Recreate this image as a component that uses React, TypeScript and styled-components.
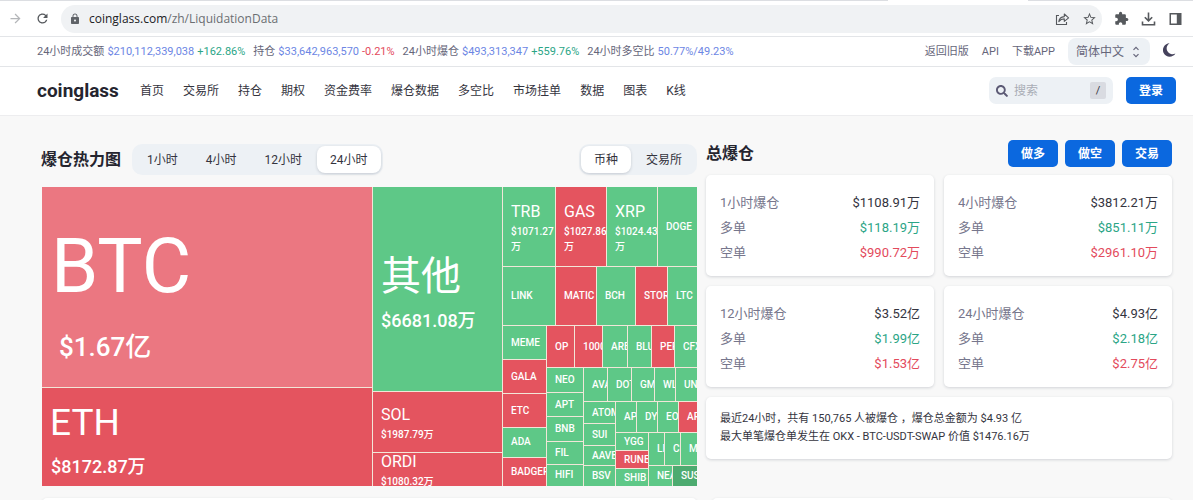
import React from 'react';
import styled, { createGlobalStyle, css } from 'styled-components';
import { MdArrowForward, MdExtension, MdLock, MdRefresh, MdStarBorder } from 'react-icons/md';
import { FaSearch } from 'react-icons/fa';

const GlobalStyle = createGlobalStyle`
  *, *::before, *::after { box-sizing: border-box; }
  body {
    margin: 0;
    background: #f8f8f8;
    color: #25252f;
    font-family: Roboto, "Noto Sans CJK SC", sans-serif;
    font-size: 12px;
  }
  button, input, select { font-family: inherit; }
  h1, h2, p, dl, dd { margin: 0; }
`;

const color = {
  ink: '#34343e',
  muted: '#66667a',
  label: '#76768c',
  blue: '#0b68df',
  value: '#6c86e4',
  up: '#2ba586',
  down: '#e34a5c',
  field: '#edf1f5',
  line: '#e3e5e8',
};

const Page = styled.div`
  height: 100vh;
  overflow: hidden;
`;

/* Browser toolbar */

const Toolbar = styled.div`
  display: flex;
  align-items: center;
  height: 37px;
  padding: 1px 10px 0 8px;
  gap: 12px;
  background: #fff;
  border-bottom: 1px solid ${color.line};
`;

const TabEdge = styled.div`
  display: flex;
  height: 1px;
  margin-bottom: -1px;
  position: relative;
`;

const TabEdgePart = styled.span<{ $grow: number; $active?: boolean }>`
  flex: ${p => p.$grow} 1 0;
  background: ${p => (p.$active ? '#fff' : '#dcdee2')};
`;

const ToolButton = styled.button<{ $faded?: boolean }>`
  display: flex;
  align-items: center;
  justify-content: center;
  width: 15px;
  height: 20px;
  padding: 0;
  border: 0;
  background: none;
  color: ${p => (p.$faded ? '#b4b6b9' : '#56595d')};
  flex: none;
`;

const AddressBar = styled.div`
  flex: 1;
  display: flex;
  align-items: center;
  gap: 12px;
  height: 28px;
  margin-left: -1px;
  padding: 0 5px 0 8px;
  border-radius: 14px;
  background: #f0f2f4;
  color: #5f6368;
`;

const Address = styled.div`
  flex: 1;
  margin-left: -4px;
  font: 12px "Open Sans", sans-serif;
  color: #6b6e72;
  b { font-weight: 400; color: #202124; }
`;

const ToolGroup = styled.div`
  display: flex;
  gap: 12px;
`;

/* Ticker */

const Ticker = styled.div`
  display: flex;
  align-items: center;
  justify-content: space-between;
  height: 30px;
  padding: 0 17px 0 37px;
  background: #fff;
  border-bottom: 1px solid ${color.line};
  font-size: 11px;
  line-height: 18px;
  color: ${color.muted};
  white-space: nowrap;
`;

const TickerGroup = styled.div<{ $gap: number }>`
  display: flex;
  align-items: center;
  gap: ${p => p.$gap}px;
`;

const Stat = styled.div`
  display: flex;
  gap: 3px;
`;

const Tone = styled.span<{ $tone: 'value' | 'up' | 'down' | 'ink' }>`
  color: ${p => color[p.$tone]};
`;

const TextLink = styled.a`
  color: inherit;
  text-decoration: none;
`;

const LanguageBox = styled.label`
  display: flex;
  align-items: center;
  height: 27px;
  padding: 0 10px 0 8px;
  border-radius: 8px;
  background: ${color.field};
`;

const LanguageSelect = styled.select`
  appearance: none;
  width: 56px;
  padding: 0;
  border: 0;
  background: none;
  font-size: 12px;
  color: ${color.muted};
`;

const IconButton = styled.button`
  display: flex;
  padding: 0 0 4px;
  border: 0;
  background: none;
  color: #45425c;
`;

/* Site header */

const Header = styled.header`
  display: flex;
  align-items: center;
  height: 49px;
  padding: 0 17px 1px 37px;
  background: #fff;
  border-bottom: 1px solid #ededef;
`;

const Logo = styled.a`
  width: 84px;
  font-size: 19px;
  line-height: 24px;
  font-weight: 700;
  color: #25252f;
  text-decoration: none;
`;

const Nav = styled.nav`
  flex: 1;
  display: flex;
  gap: 19px;
  margin-left: 19px;
  line-height: 18px;
  color: ${color.ink};
  white-space: nowrap;
`;

const SearchBox = styled.label`
  display: flex;
  align-items: center;
  width: 124px;
  height: 27px;
  padding: 0 7px;
  border-radius: 7px;
  background: ${color.field};
  color: #5c5a75;
`;

const SearchInput = styled.input`
  flex: 1;
  min-width: 0;
  padding: 0 0 0 6px;
  border: 0;
  outline: 0;
  background: none;
  font-size: 12px;
  &::placeholder { color: #a9adb5; opacity: 1; }
`;

const Key = styled.kbd`
  width: 16px;
  height: 17px;
  border-radius: 2px;
  background: #d9dbe1;
  color: ${color.ink};
  font: 11px/17px Roboto, sans-serif;
  text-align: center;
`;

const PrimaryButton = styled.button`
  width: 50px;
  height: 27px;
  padding: 0;
  border: 0;
  border-radius: 5px;
  background: ${color.blue};
  color: #fff;
  font-size: 12px;
  line-height: 18px;
  font-weight: 700;
`;

const LoginButton = styled(PrimaryButton)`
  margin-left: 13px;
`;

/* Page body */

const Main = styled.main`
  display: flex;
  align-items: flex-start;
  gap: 9px;
  padding: 24px 21px 0 41px;
`;

const HeatColumn = styled.section`
  flex: 656 1 0;
  min-width: 0;
  padding-top: 4px;
`;

const TotalColumn = styled.section`
  flex: 466 1 0;
  min-width: 0;
`;

const SectionHead = styled.div<{ $space: number }>`
  display: flex;
  align-items: center;
  margin-bottom: ${p => p.$space}px;
`;

const Title = styled.h2`
  font-size: 16px;
  line-height: 24px;
  font-weight: 700;
  color: #25252f;
  white-space: nowrap;
`;

const Segmented = styled.div`
  display: flex;
  gap: 2px;
  padding: 2px;
  border-radius: 10px;
  background: ${color.field};
`;

const Segment = styled.button<{ $active?: boolean }>`
  height: 27px;
  padding: 0 13px;
  border: 0;
  border-radius: 8px;
  background: none;
  color: ${color.ink};
  font-size: 12px;
  line-height: 18px;
  ${p => p.$active && css`
    background: #fff;
    box-shadow: 0 1px 3px rgba(40, 50, 70, 0.2);
  `}
`;

const Spacer = styled.div<{ $width?: number }>`
  flex: ${p => (p.$width ? `0 0 ${p.$width}px` : '1')};
`;

/* Treemap */

const Split = styled.div<{ $dir: 'row' | 'column'; $grow: number }>`
  flex: ${p => p.$grow} 1 0;
  display: flex;
  flex-direction: ${p => p.$dir};
  gap: 1px;
  min-width: 0;
  min-height: 0;
`;

const HeatMap = styled.div`
  display: flex;
  height: 299px;
  margin-left: 1px;
  background: #f2e6d8;
`;

const tileFill = { red: '#e4545f', pale: '#eb7781', green: '#5ec887', dark: '#4dab70' };

type TileSize = 'xs' | 's' | 'm' | 'l' | 'xl';

interface TileText {
  name: number;
  nameLine: number;
  namePad: number;
  value: number;
  valueLine: number;
  valuePad: number;
  top: number;
}

const tileText: Record<TileSize, TileText> = {
  xs: { name: 10, nameLine: 14, namePad: 8, value: 10, valueLine: 14, valuePad: 8, top: 0 },
  s: { name: 16, nameLine: 24, namePad: 8, value: 10, valueLine: 15, valuePad: 8, top: 0 },
  m: { name: 37, nameLine: 52, namePad: 8, value: 18, valueLine: 36, valuePad: 9, top: 4 },
  l: { name: 40, nameLine: 52, namePad: 8, value: 18, valueLine: 36, valuePad: 8, top: 6 },
  xl: { name: 76, nameLine: 96, namePad: 9, value: 26, valueLine: 66, valuePad: 17, top: 12 },
};

const TileBox = styled.div<{ $grow: number; $fill: keyof typeof tileFill }>`
  flex: ${p => p.$grow} 1 0;
  display: flex;
  flex-direction: column;
  justify-content: center;
  min-width: 0;
  min-height: 0;
  overflow: hidden;
  background: ${p => tileFill[p.$fill]};
  color: #fff;
`;

const TileName = styled.div<{ $size: TileSize }>`
  flex: none;
  margin-top: ${p => tileText[p.$size].top * 2}px;
  padding-left: ${p => tileText[p.$size].namePad}px;
  font-size: ${p => tileText[p.$size].name}px;
  line-height: ${p => tileText[p.$size].nameLine}px;
  font-weight: ${p => (p.$size === 'xs' ? 500 : 400)};
  white-space: nowrap;
`;

const TileValue = styled.div<{ $size: TileSize }>`
  flex: none;
  padding-left: ${p => tileText[p.$size].valuePad}px;
  font-size: ${p => tileText[p.$size].value}px;
  line-height: ${p => tileText[p.$size].valueLine}px;
  font-weight: 500;
`;

interface Tile {
  name: string;
  grow: number;
  fill: keyof typeof tileFill;
  value?: string;
  size?: TileSize;
}

interface Group {
  dir: 'row' | 'column';
  grow: number;
  items: Array<Tile | Group>;
}

const tile = (name: string, grow: number, fill: Tile['fill'] = 'green', value?: string, size: TileSize = 'xs'): Tile =>
  ({ name, grow, fill, value, size });
const row = (grow: number, ...items: Group['items']): Group => ({ dir: 'row', grow, items });
const column = (grow: number, ...items: Group['items']): Group => ({ dir: 'column', grow, items });

const smallest = row(84,
  column(31, tile('ATOM', 21), tile('SUI', 21), tile('AAVE', 19), tile('BSV', 20)),
  column(81,
    row(30, tile('APE', 20), tile('DYDX', 20), tile('EOS', 20), tile('AR', 18, 'red')),
    row(53,
      column(32, tile('YGG', 17), tile('RUNE', 17, 'red'), tile('SHIB', 17)),
      column(48,
        row(32, tile('LDO', 15), tile('CRV', 15), tile('MKR', 16)),
        row(20, tile('NEAR', 23), tile('SUSHI', 24, 'dark'))))));

const small = column(150,
  row(41,
    tile('OP', 27, 'red'), tile('1000PEPE', 27, 'red'), tile('ARB', 24),
    tile('BLUR', 23), tile('PERP', 22, 'red'), tile('CFX', 22)),
  row(118,
    column(36, tile('NEO', 24), tile('APT', 23), tile('BNB', 23), tile('FIL', 22), tile('HIFI', 21)),
    column(113,
      row(33, tile('AVAX', 23), tile('DOT', 23), tile('GMT', 22), tile('WLD', 20), tile('UNI', 21)),
      smallest)));

const market = row(1,
  column(330,
    tile('BTC', 200, 'pale', '$1.67亿', 'xl'),
    tile('ETH', 98, 'red', '$8172.87万', 'm')),
  column(129,
    tile('其他', 204, 'green', '$6681.08万', 'l'),
    tile('SOL', 60, 'red', '$1987.79万', 's'),
    tile('ORDI', 33, 'red', '$1080.32万', 's')),
  column(194,
    row(79,
      tile('TRB', 52, 'green', '$1071.27万', 's'),
      tile('GAS', 50, 'red', '$1027.86万', 's'),
      tile('XRP', 50, 'green', '$1024.43万', 's'),
      tile('DOGE', 39)),
    row(58, tile('LINK', 52), tile('MATIC', 40, 'red'), tile('BCH', 38), tile('STORJ', 31, 'red'), tile('LTC', 29)),
    row(160,
      column(43, tile('MEME', 33), tile('GALA', 33, 'red'), tile('ETC', 32, 'red'), tile('ADA', 29), tile('BADGER', 28, 'red')),
      small)));

function HeatNode({ node }: { node: Tile | Group }) {
  if ('items' in node) {
    return (
      <Split $dir={node.dir} $grow={node.grow}>
        {node.items.map((item, i) => <HeatNode key={i} node={item} />)}
      </Split>
    );
  }
  const size = node.size ?? 'xs';
  return (
    <TileBox $grow={node.grow} $fill={node.fill}>
      <TileName $size={size}>{node.name}</TileName>
      {node.value && <TileValue $size={size}>{node.value}</TileValue>}
    </TileBox>
  );
}

/* Totals */

const CardGrid = styled.div`
  display: grid;
  grid-template-columns: 1fr 1fr;
  gap: 10px;
`;

const Card = styled.div`
  border-radius: 5px;
  background: #fff;
  box-shadow: 0 1px 3px rgba(40, 50, 70, 0.18);
`;

const TotalCard = styled(Card)`
  padding: 15px 14px 11px;
`;

const TotalRow = styled.div`
  display: flex;
  justify-content: space-between;
  font-size: 13px;
  line-height: 25px;
  color: ${color.label};
`;

const SummaryCard = styled(Card)`
  grid-column: 1 / -1;
  padding: 13px 14px;
  font-size: 11px;
  line-height: 18px;
  color: ${color.ink};
`;

const ButtonRow = styled.div`
  display: flex;
  gap: 7px;
`;

const NextRow = styled.div`
  display: flex;
  gap: 15px;
  padding: 12px 21px 0 42px;
`;

const NextCard = styled(Card)<{ $grow: number }>`
  flex: ${p => p.$grow} 1 0;
  height: 300px;
`;

/* Icons */

const ShareIcon = () => (
  <svg width="15" height="14" viewBox="0 0 15 14" fill="none" stroke="currentColor" strokeWidth="1.1">
    <path d="M4 3.5H1.5V12.5H11.5V10" />
    <path d="M3.8 9.6C4.2 6.5 6 4.8 9.3 4.6V2L13.6 5.8L9.3 9.4V6.9C6.8 6.9 5.2 7.8 3.8 9.6Z" strokeLinejoin="round" />
  </svg>
);

const DownloadIcon = () => (
  <svg width="15" height="14" viewBox="0 0 15 14" fill="none" stroke="currentColor" strokeWidth="1.6">
    <path d="M7.5 0.5V8.5M3.8 5.2L7.5 8.9L11.2 5.2M1.5 9.5V12.7H13.5V9.5" />
  </svg>
);

const PanelIcon = () => (
  <svg width="13" height="12" viewBox="0 0 13 12" fill="currentColor">
    <path fillRule="evenodd" d="M0.5 0H12.5V12H0.5ZM2 1.5V10.5H7.8V1.5Z" />
  </svg>
);

const SortIcon = () => (
  <svg width="8" height="12" viewBox="0 0 8 12" fill="none" stroke="currentColor" strokeWidth="1.2">
    <path d="M1.5 3.8L4 1.3L6.5 3.8M1.5 8.2L4 10.7L6.5 8.2" />
  </svg>
);

const MoonIcon = () => (
  <svg width="13" height="14" viewBox="0 0 13 14" fill="currentColor">
    <path d="M6.6 0.3A6.7 6.7 0 1 0 12.4 10.4A5.6 5.6 0 0 1 6.6 0.3Z" />
  </svg>
);

const stats: Array<{ label: string; value: string; change?: string; tone?: 'up' | 'down' }> = [
  { label: '24小时成交额', value: '$210,112,339,038', change: '+162.86%', tone: 'up' },
  { label: '持仓', value: '$33,642,963,570', change: '-0.21%', tone: 'down' },
  { label: '24小时爆仓', value: '$493,313,347', change: '+559.76%', tone: 'up' },
  { label: '24小时多空比', value: '50.77%/49.23%' },
];

const navItems = ['首页', '交易所', '持仓', '期权', '资金费率', '爆仓数据', '多空比', '市场挂单', '数据', '图表', 'K线'];

const totals = [
  { label: '1小时爆仓', total: '$1108.91万', long: '$118.19万', short: '$990.72万' },
  { label: '4小时爆仓', total: '$3812.21万', long: '$851.11万', short: '$2961.10万' },
  { label: '12小时爆仓', total: '$3.52亿', long: '$1.99亿', short: '$1.53亿' },
  { label: '24小时爆仓', total: '$4.93亿', long: '$2.18亿', short: '$2.75亿' },
];

export default function App() {
  return (
    <Page>
      <GlobalStyle />
      <TabEdge>
        <TabEdgePart $grow={888} />
        <TabEdgePart $grow={140} $active />
        <TabEdgePart $grow={165} />
      </TabEdge>
      <Toolbar>
        <ToolButton $faded aria-label="前进"><MdArrowForward size={15} /></ToolButton>
        <ToolButton aria-label="刷新"><MdRefresh size={17} /></ToolButton>
        <AddressBar>
          <MdLock size={12} />
          <Address><b>coinglass.com</b>/zh/LiquidationData</Address>
          <ToolButton aria-label="分享"><ShareIcon /></ToolButton>
          <ToolButton aria-label="收藏"><MdStarBorder size={16} /></ToolButton>
        </AddressBar>
        <ToolGroup>
          <ToolButton aria-label="扩展程序"><MdExtension size={15} /></ToolButton>
          <ToolButton aria-label="下载"><DownloadIcon /></ToolButton>
          <ToolButton aria-label="侧边栏"><PanelIcon /></ToolButton>
        </ToolGroup>
      </Toolbar>

      <Ticker>
        <TickerGroup $gap={8}>
          {stats.map(s => (
            <Stat key={s.label}>
              <span>{s.label}</span>
              <Tone $tone="value">{s.value}</Tone>
              {s.change && <Tone $tone={s.tone!}>{s.change}</Tone>}
            </Stat>
          ))}
        </TickerGroup>
        <TickerGroup $gap={13}>
          <TextLink href="#old">返回旧版</TextLink>
          <TextLink href="#api">API</TextLink>
          <TextLink href="#app">下载APP</TextLink>
          <LanguageBox>
            <LanguageSelect aria-label="语言" defaultValue="zh">
              <option value="zh">简体中文</option>
            </LanguageSelect>
            <SortIcon />
          </LanguageBox>
          <IconButton aria-label="深色模式"><MoonIcon /></IconButton>
        </TickerGroup>
      </Ticker>

      <Header>
        <Logo href="#home">coinglass</Logo>
        <Nav>
          {navItems.map(item => <TextLink key={item} href="#nav">{item}</TextLink>)}
        </Nav>
        <SearchBox>
          <FaSearch size={12} />
          <SearchInput placeholder="搜索" aria-label="搜索" />
          <Key>/</Key>
        </SearchBox>
        <LoginButton>登录</LoginButton>
      </Header>

      <Main>
        <HeatColumn>
          <SectionHead $space={12}>
            <Title>爆仓热力图</Title>
            <Spacer $width={11} />
            <Segmented>
              <Segment>1小时</Segment>
              <Segment>4小时</Segment>
              <Segment>12小时</Segment>
              <Segment $active>24小时</Segment>
            </Segmented>
            <Spacer />
            <Segmented>
              <Segment $active>币种</Segment>
              <Segment>交易所</Segment>
            </Segmented>
          </SectionHead>
          <HeatMap><HeatNode node={market} /></HeatMap>
        </HeatColumn>

        <TotalColumn>
          <SectionHead $space={8}>
            <Title>总爆仓</Title>
            <Spacer />
            <ButtonRow>
              <PrimaryButton>做多</PrimaryButton>
              <PrimaryButton>做空</PrimaryButton>
              <PrimaryButton>交易</PrimaryButton>
            </ButtonRow>
          </SectionHead>
          <CardGrid>
            {totals.map(t => (
              <TotalCard key={t.label}>
                <TotalRow><span>{t.label}</span><Tone $tone="ink">{t.total}</Tone></TotalRow>
                <TotalRow><span>多单</span><Tone $tone="up">{t.long}</Tone></TotalRow>
                <TotalRow><span>空单</span><Tone $tone="down">{t.short}</Tone></TotalRow>
              </TotalCard>
            ))}
            <SummaryCard>
              <p>最近24小时，共有 150,765 人被爆仓 ，爆仓总金额为 $4.93 亿</p>
              <p>最大单笔爆仓单发生在 OKX - BTC-USDT-SWAP 价值 $1476.16万</p>
            </SummaryCard>
          </CardGrid>
        </TotalColumn>
      </Main>

      <NextRow>
        <NextCard $grow={655} />
        <NextCard $grow={460} />
      </NextRow>
    </Page>
  );
}
